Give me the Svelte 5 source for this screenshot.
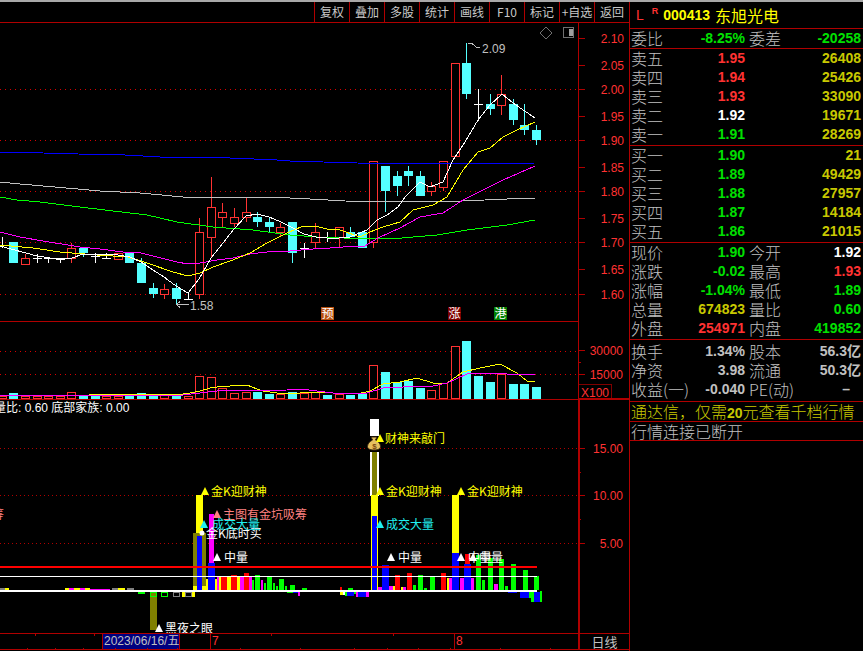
<script>
  const tools = ['复权', '叠加', '多股', '统计', '画线', 'F10', '标记', '+自选', '返回'];

  const cx = (i) => Math.round(1.7 + 11.615 * i);

  // kind, top of body, bottom of body, high, low (all in screen y)
  const candles = [
    ['w', 245, 245, 237, 248], ['c', 242, 263, 242, 263], ['r', 258, 264, 254, 264], ['w', 258, 258, 254, 263],
    ['w', 258, 258, 257, 263], ['w', 259, 259, 259, 263], ['r', 248, 258, 243, 263], ['c', 248, 253, 248, 257],
    ['w', 256, 256, 253, 263], ['w', 258, 258, 253, 259], ['r', 253, 259, 253, 259], ['c', 253, 263, 253, 263],
    ['c', 263, 283, 258, 283], ['c', 288, 294, 283, 298], ['r', 289, 294, 284, 299], ['c', 288, 299, 283, 304],
    ['w', 299, 299, 293, 299], ['r', 232, 294, 218, 299], ['r', 207, 237, 177, 258], ['r', 212, 217, 203, 227],
    ['r', 217, 223, 208, 227], ['r', 212, 217, 197, 222], ['c', 217, 222, 212, 227], ['c', 222, 227, 217, 232],
    ['r', 227, 232, 223, 237], ['c', 222, 253, 222, 263], ['w', 248, 248, 243, 258], ['r', 232, 242, 223, 248],
    ['w', 237, 237, 232, 242], ['r', 227, 237, 227, 247], ['c', 232, 237, 227, 237], ['c', 232, 248, 232, 248],
    ['r', 161, 242, 161, 248], ['c', 166, 191, 166, 212], ['c', 176, 186, 171, 196], ['c', 171, 176, 166, 186],
    ['c', 176, 196, 171, 196], ['r', 186, 191, 182, 196], ['r', 161, 187, 161, 191], ['r', 63, 156, 63, 156],
    ['c', 63, 94, 43, 99], ['w', 104, 104, 89, 121], ['c', 104, 109, 94, 115], ['r', 94, 105, 75, 115],
    ['c', 104, 120, 99, 125], ['c', 125, 130, 104, 135], ['c', 130, 140, 125, 145]
  ];

  const maLines = [
    ['#0000ff', '0,152 43,153 78,154 125,155 160,157 183,157 230,158 277,160 290,161 323,162 357,163 437,164 535,163'],
    ['#c0c0c0', '0,182 20,184 55,187 100,191 140,193 183,197 263,197 290,198 310,199 345,201 440,202 507,199 535,198'],
    ['#00ff00', '0,197 17,200 40,202 80,207 113,211 147,215 177,222 213,227 253,230 290,235 317,237 343,238 390,239 437,235 467,230 507,225 535,220'],
    ['#ff00ff', '0,232 20,237 43,241 80,247 100,249 123,252 137,252 157,257 177,262 188,264 200,263 217,260 233,258 250,254 267,252 290,251 313,249 330,248 343,247 365,246 378,238 400,228 420,217 443,213 463,200 503,180 535,166'],
    ['#ffff00', '0,245 33,248 60,252 72,253 97,255 128,257 147,263 173,272 188,276 200,273 213,267 233,260 250,253 267,243 287,233 303,226 315,226 327,229 340,230 360,237 370,232 383,227 400,222 413,210 433,205 447,197 463,170 478,152 490,148 503,137 517,130 535,122'],
    ['#ffffff', '0,246 37,256 50,258 61,259 72,258 83,254 96,254 118,255 130,257 141,262 153,270 164,277 176,286 188,293 199,279 211,258 223,243 234,229 246,216 257,214 269,217 281,222 293,228 304,234 316,237 327,238 339,238 350,237 367,230 377,220 387,215 398,207 405,197 420,182 430,187 443,182 453,160 465,142 478,120 490,105 502,94 513,103 535,118']
  ];

  const priceAxis = [
    ['2.10', 38], ['2.05', 65], ['2.00', 89], ['1.95', 116], ['1.90', 140], ['1.85', 167],
    ['1.80', 191], ['1.75', 218], ['1.70', 242], ['1.65', 269], ['1.60', 294]
  ];
  const priceGrid = [89, 140, 191, 242, 294];

  const badges = [
    ['预', 321, '#b8500f'], ['涨', 448, '#7d0000'], ['港', 494, '#008000']
  ];

  // top of each volume bar, same index as candles
  const volumes = [
    396, 393, 396, 396, 396, 396, 392, 396, 396, 396, 396, 396, 393, 395, 395, 395, 396, 376, 377, 388,
    393, 392, 392, 394, 394, 392, 393, 392, 395, 394, 395, 394, 365, 372, 382, 381, 388, 390, 383, 346,
    341, 376, 382, 374, 384, 384, 387
  ];
  // the flat sessions that still closed down
  const downCrosses = [8, 28, 41];
  const isDown = (i) => candles[i][0] === 'c' || downCrosses.includes(i);

  const volYellow = '89,394 113,394 183,394 190,393 200,391 210,388 217,387 230,386 240,385 247,385 257,389 263,391 277,393 300,393 320,392 333,393 357,394 370,391 383,384 400,382 417,378 433,383 447,383 463,372 480,368 500,364 517,373 527,381 535,382';
  const volMagenta = '0,396 147,395 183,395 200,393 217,391 287,390 300,389 317,391 333,393 367,393 383,388 403,387 433,386 447,383 467,374 485,373 507,374 535,375';

  const [Y, M, R, G, B, O, W, S] = ['#ffff00', '#ff00ff', '#ff0000', '#00ff00', '#0000ff', '#808000', '#ffffff', '#808080'];

  // x0, x1, y0, y1, colour, hollow
  const bars = [
    [0, 5, 588, 590, S], [5, 9, 588, 590, Y],
    [65, 69, 588, 590, Y], [69, 74, 588, 590, M], [74, 80, 588, 590, Y], [80, 85, 588, 590, M], [85, 90, 588, 590, Y],
    [90, 110, 589, 590, M], [112, 118, 588, 590, S], [118, 125, 588, 590, Y], [127, 134, 588, 590, S],
    [138, 145, 592, 594, G, 1], [150, 157, 592, 630, O], [150, 157, 592, 597, G, 1], [161, 168, 592, 597, G, 1],
    [173, 180, 592, 597, S, 1], [182, 185, 592, 597, Y], [185, 192, 592, 597, S, 1], [192, 195, 592, 597, Y],
    [193, 206, 533, 590, O], [196, 203, 495, 533, Y], [193, 197, 586, 590, Y], [202, 206, 586, 590, Y], [197, 202, 536, 590, B],
    [206, 208, 579, 590, Y], [209, 214, 514, 563, M], [208, 215, 563, 590, B], [215, 217, 579, 590, Y],
    [217, 219, 577, 590, M], [219, 221, 577, 590, Y], [221, 227, 577, 590, R], [227, 231, 577, 590, Y], [231, 237, 575, 590, R],
    [237, 240, 577, 590, Y], [240, 244, 577, 590, M], [244, 249, 573, 590, R], [249, 252, 577, 590, M],
    [252, 254, 580, 590, G], [255, 260, 575, 590, G], [261, 263, 580, 590, M], [264, 266, 583, 590, G], [267, 272, 577, 590, G],
    [273, 275, 583, 590, G], [276, 278, 586, 590, G], [279, 284, 579, 590, G], [285, 287, 586, 590, G], [290, 295, 585, 590, G],
    [302, 307, 588, 590, G], [287, 293, 592, 593, G], [293, 298, 592, 593, B], [298, 300, 592, 596, M],
    [340, 342, 587, 590, R], [348, 353, 588, 590, G], [340, 343, 592, 595, Y], [343, 345, 592, 595, W], [345, 347, 592, 596, G],
    [347, 354, 592, 596, B], [354, 356, 592, 594, G], [356, 358, 592, 597, M], [358, 366, 592, 597, B], [366, 369, 592, 597, M],
    [370, 379, 419, 436, W], [370, 379, 452, 496, W], [372, 377, 452, 495, O], [371, 378, 495, 590, Y], [372, 377, 516, 590, B],
    [378, 382, 587, 590, M], [382, 389, 565, 590, B], [389, 393, 586, 590, M], [393, 395, 586, 590, Y], [395, 400, 575, 590, R],
    [401, 403, 587, 590, Y], [403, 406, 587, 590, M], [407, 412, 573, 590, R], [413, 416, 585, 590, G], [418, 423, 575, 590, G],
    [424, 427, 588, 590, G], [430, 435, 577, 590, G], [441, 446, 573, 590, R], [447, 449, 578, 590, Y], [449, 452, 578, 590, M],
    [452, 459, 495, 553, Y], [452, 459, 553, 590, B], [460, 464, 578, 590, M], [464, 471, 564, 590, B], [465, 470, 554, 564, R],
    [471, 474, 578, 590, M], [476, 481, 555, 590, G], [482, 485, 580, 590, G], [488, 493, 558, 590, G], [494, 498, 584, 590, M],
    [499, 504, 559, 590, G], [505, 508, 586, 590, G], [511, 516, 564, 590, G], [523, 528, 570, 590, G], [534, 539, 576, 590, G],
    [508, 517, 592, 593, B], [520, 529, 592, 598, B], [529, 531, 592, 598, G], [531, 534, 592, 602, G], [534, 540, 592, 602, B], [540, 542, 591, 602, G]
  ];

  // text, triangle centre x, text x, centre y, colour
  const signals = [
    ['筹', null, -8, 514, '#ff8080'],
    ['主图有金坑吸筹', 217, 223, 514, '#ff8080'],
    ['金K迎财神', 205, 211, 491, Y],
    ['金K底时买', null, 206, 533, W],
    ['成交大量', 204, 212, 524, '#20f0f0'],
    ['中量', 217, 224, 557, W],
    ['黑夜之眼', 159, 165, 628, W],
    ['财神来敲门', 380, 385, 438, Y],
    ['金K迎财神', 380, 386, 491, Y],
    ['金K迎财神', 461, 467, 491, Y],
    ['成交大量', 380, 386, 524, '#20f0f0'],
    ['中量', 391, 398, 557, W],
    ['中量', 461, 468, 557, W],
    ['中量', 473, 479, 557, W]
  ];

  const quoteTop = ['委比', '-8.25%', '委差', '-20258'];
  const sells = [
    ['卖五', '1.95', 'up', '26408'], ['卖四', '1.94', 'up', '25426'], ['卖三', '1.93', 'up', '33090'],
    ['卖二', '1.92', 'white', '19671'], ['卖一', '1.91', 'down', '28269']
  ];
  const buys = [
    ['买一', '1.90', 'down', '21'], ['买二', '1.89', 'down', '49429'], ['买三', '1.88', 'down', '27957'],
    ['买四', '1.87', 'down', '14184'], ['买五', '1.86', 'down', '21015']
  ];
  const stats = [
    ['现价', '1.90', 'down', '今开', '1.92', 'white'],
    ['涨跌', '-0.02', 'down', '最高', '1.93', 'up'],
    ['涨幅', '-1.04%', 'down', '最低', '1.89', 'down'],
    ['总量', '674823', 'vol', '量比', '0.60', 'down'],
    ['外盘', '254971', 'up', '内盘', '419852', 'down']
  ];
  const finance = [
    ['换手', '1.34%', 'gray', '股本', '56.3亿', 'gray'],
    ['净资', '3.98', 'gray', '流通', '50.3亿', 'gray'],
    ['收益(一)', '-0.040', 'gray', 'PE(动)', '–', 'gray dash']
  ];
  const topTicks = [35, 94, 271, 393];
  const bottomTicks = [27, 55, 83, 115, 147, 177, 240, 300, 354, 387, 418, 450, 500, 550];
</script>

<div class="screen">
  <div class="main">
    <div class="toolbar">
      {#each tools as t}
        <div class="tool">{t}</div>
      {/each}
    </div>

    <svg class="chart" width="629" height="610" viewBox="0 23 629 610" shape-rendering="crispEdges">
      <!-- price pane -->
      {#each priceGrid as y}
        <line class="dots" x1="0" x2="578" y1={y} y2={y} />
      {/each}
      {#each candles as [kind, top, bottom, high, low], i}
        {#if kind === 'c'}
          <line x1={cx(i) + 0.5} x2={cx(i) + 0.5} y1={high} y2={low} stroke="#54ffff" />
          <rect x={cx(i) - 4} y={top} width="9" height={bottom - top} fill="#54ffff" />
        {:else if kind === 'r'}
          <line x1={cx(i) + 0.5} x2={cx(i) + 0.5} y1={high} y2={low} stroke="#ff3232" />
          <rect x={cx(i) - 3.5} y={top + 0.5} width="8" height={bottom - top} fill="#000" stroke="#ff3232" />
        {:else}
          <line x1={cx(i) + 0.5} x2={cx(i) + 0.5} y1={high} y2={low} stroke="#fff" />
          <line x1={cx(i) - 4} x2={cx(i) + 5} y1={top + 0.5} y2={top + 0.5} stroke="#fff" />
        {/if}
      {/each}
      {#each maLines as [color, pts]}
        <polyline points={pts} fill="none" stroke={color} />
      {/each}

      <polyline points="189,304.5 177,304.5" fill="none" stroke="#c0c0c0" />
      <polyline points="180,301.5 176.5,304.5 180,307.5" fill="none" stroke="#c0c0c0" />
      <text class="mark" x="190" y="309.5">1.58</text>
      <polyline points="467.5,43.5 472,43.5 476,47 480,48" fill="none" stroke="#c0c0c0" />
      <text class="mark" x="482" y="53">2.09</text>

      <polygon points="546,27 552,33 546,39 540,33" fill="none" stroke="#707070" />
      <rect x="563.5" y="27.5" width="10" height="10" fill="none" stroke="#707070" />
      <rect x="569" y="29" width="4" height="7" fill="#a0a0a0" />

      {#each badges as [label, x, color]}
        <rect {x} y="307" width="13" height="13" fill={color} />
        <text class="badge" x={x + 6.5} y="318">{label}</text>
      {/each}

      {#each priceAxis as [label, y]}
        <line class="rule" x1="578" x2="585" y1={y + 0.5} y2={y + 0.5} />
        <text class="axis" x="624" y={y + 4.5}>{label}</text>
      {/each}

      <!-- volume pane -->
      <line class="dots" x1="0" x2="578" y1="351" y2="351" />
      <line class="dots" x1="0" x2="578" y1="374" y2="374" />
      {#each volumes as top, i}
        {#if isDown(i)}
          <rect x={cx(i) - 4} y={top} width="9" height={399 - top} fill="#54ffff" />
        {:else}
          <rect x={cx(i) - 3.5} y={top + 0.5} width="8" height={398 - top} fill="#000" stroke="#ff3232" />
        {/if}
      {/each}
      <polyline points={volYellow} fill="none" stroke="#ffff00" />
      <polyline points={volMagenta} fill="none" stroke="#ff00ff" />
      <line class="rule" x1="578" x2="585" y1="350.5" y2="350.5" />
      <line class="rule" x1="578" x2="581" y1="362.5" y2="362.5" />
      <line class="rule" x1="578" x2="585" y1="374.5" y2="374.5" />
      <text class="axis" x="623" y="355">30000</text>
      <text class="axis" x="623" y="379">15000</text>
      <rect class="box" x="578.5" y="384.5" width="33" height="15" />
      <text class="axis" x="609" y="396.5">X100</text>

      <!-- indicator pane -->
      <text class="legend" x="-6" y="412">量比: 0.60 底部家族: 0.00</text>
      <line class="fine" x1="0" x2="578" y1="448" y2="448" />
      <line class="fine" x1="0" x2="578" y1="495" y2="495" />
      <line class="fine" x1="0" x2="578" y1="543" y2="543" />
      {#each bars as [x0, x1, y0, y1, color, hollow]}
        {#if hollow}
          <rect x={x0 + 0.5} y={y0 + 0.5} width={x1 - x0 - 1} height={y1 - y0 - 1} fill="none" stroke={color} />
        {:else}
          <rect x={x0} y={y0} width={x1 - x0} height={y1 - y0} fill={color} />
        {/if}
      {/each}
      <rect x="0" y="566" width="537" height="2" fill="#ff0000" />
      <rect x="0" y="576" width="537" height="1" fill="#ffffff" />
      <rect x="0" y="590" width="537" height="2" fill="#ffffff" />

      <g shape-rendering="auto">
        <path d="M371 437 h6 l-1.5 3 c3 1.5 5 4 5 6.5 c0 2.5-3 3.5-6.5 3.5 s-6.5-1-6.5-3.5 c0-2.5 2-5 5-6.5 z" fill="#e6c060" stroke="#3a2a10" stroke-width="1" />
        <text class="dollar" x="374.5" y="449">$</text>
      </g>

      {#each signals as [label, tx, x, y, color]}
        {#if tx !== null}
          <polygon points="{tx},{y - 4} {tx + 4},{y + 4} {tx - 4},{y + 4}" fill={color} shape-rendering="auto" />
        {:else if x > 0}
          <circle cx="202" cy={y} r="2.5" fill={color} shape-rendering="auto" />
        {/if}
        <text class="signal" {x} y={y + 4.5} fill={color}>{label}</text>
      {/each}

      {#each [['15.00', 448], ['10.00', 495], ['5.00', 543]] as [label, y]}
        <line class="rule" x1="578" x2="585" y1={y + 0.5} y2={y + 0.5} />
        <text class="axis" x="623" y={y + 4.5}>{label}</text>
      {/each}
      <line class="rule" x1="578" x2="581" y1="472.5" y2="472.5" />
      <line class="rule" x1="578" x2="581" y1="519.5" y2="519.5" />

      <!-- pane frames -->
      <line class="rule" x1="0" x2="578" y1="321.5" y2="321.5" />
      <line class="rule" x1="0" x2="629" y1="399.5" y2="399.5" />
      <line class="rule" x1="578" x2="629" y1="398.5" y2="398.5" />
      <line class="rule" x1="578.5" x2="578.5" y1="23" y2="399" />
      <line class="rule" x1="578.5" x2="578.5" y1="399" y2="633" />
      <line class="rule" x1="579.5" x2="579.5" y1="399" y2="633" />
    </svg>

    <div class="timebar">
      <div class="cell first"></div>
      <div class="cell date">2023/06/16/五</div>
      <div class="cell blank"></div>
      <div class="cell month seven">7</div>
      <div class="cell month eight">8</div>
      <div class="cell period">日线</div>
      <svg class="ticks" width="578" height="16" shape-rendering="crispEdges">
        {#each topTicks as x}
          <line x1={x + 0.5} x2={x + 0.5} y1="0" y2="2" />
        {/each}
        {#each bottomTicks as x}
          <line x1={x + 0.5} x2={x + 0.5} y1="14" y2="16" />
        {/each}
      </svg>
    </div>
  </div>

  <aside class="panel">
    <header class="title">
      <span class="flag up">L</span>
      <sup class="rz up">R</sup>
      <span class="code">000413</span>
      <span class="name">东旭光电</span>
    </header>

    <div class="sec">
      <span class="label">{quoteTop[0]}</span>
      <span class="num down">{quoteTop[1]}</span>
      <span class="label second">{quoteTop[2]}</span>
      <span class="num down">{quoteTop[3]}</span>
    </div>

    <div class="sec five">
      {#each sells as [label, price, tone, volume]}
        <span class="label">{label}</span>
        <span class="num {tone}">{price}</span>
        <span class="num vol last">{volume}</span>
      {/each}
    </div>

    <div class="sec five">
      {#each buys as [label, price, tone, volume]}
        <span class="label">{label}</span>
        <span class="num {tone}">{price}</span>
        <span class="num vol last">{volume}</span>
      {/each}
    </div>

    <div class="sec five">
      {#each stats as [a, av, at, b, bv, bt]}
        <span class="label">{a}</span>
        <span class="num {at}">{av}</span>
        <span class="label second">{b}</span>
        <span class="num {bt}">{bv}</span>
      {/each}
    </div>

    <div class="sec three">
      {#each finance as [a, av, at, b, bv, bt]}
        <span class="label wide">{a}</span>
        <span class="num {at}">{av}</span>
        <span class="label second wide">{b}</span>
        <span class="num {bt}">{bv}</span>
      {/each}
    </div>

    <div class="notice ad">通达信，仅需<b>20</b>元查看千档行情</div>
    <div class="notice status">行情连接已断开</div>
  </aside>
</div>

<style>
  :global(body) {
    margin: 0;
    background: #000;
  }

  .screen {
    display: flex;
    width: 863px;
    height: 651px;
    box-sizing: border-box;
    border-top: 2px solid #a8a8a8;
    background: #000;
    overflow: hidden;
    font-family: "Noto Sans CJK SC", "Liberation Sans", sans-serif;
    color: #c0c0c0;
  }

  .main {
    width: 629px;
    flex: none;
    display: flex;
    flex-direction: column;
  }

  .toolbar {
    display: flex;
    justify-content: flex-end;
    height: 20px;
    border-bottom: 1px solid #b00000;
    flex: none;
  }
  .tool {
    width: 34px;
    border-left: 1px solid #b00000;
    text-align: center;
    font-size: 12px;
    line-height: 20px;
    color: #c8c8c8;
  }

  .chart {
    display: block;
    flex: none;
  }
  .chart text {
    font-family: "Liberation Sans", sans-serif;
  }
  .dots {
    stroke: #d80000;
    stroke-dasharray: 1 4;
  }
  .fine {
    stroke: #b00000;
    stroke-dasharray: 1 3;
  }
  .rule {
    stroke: #b00000;
  }
  .box {
    fill: none;
    stroke: #800000;
  }
  .axis {
    fill: #ff3232;
    font-size: 12px;
    text-anchor: end;
  }
  .mark {
    fill: #c0c0c0;
    font-size: 12px;
  }
  .chart .badge {
    fill: #fff;
    font-family: "Noto Sans CJK SC", sans-serif;
    font-size: 12px;
    text-anchor: middle;
  }
  .chart .legend {
    fill: #fff;
    font-family: "Liberation Sans", "Noto Sans CJK SC", sans-serif;
    font-size: 12px;
  }
  .chart .signal {
    font-family: "Noto Sans CJK SC", sans-serif;
    font-size: 12px;
  }
  .chart .dollar {
    fill: #7a4a10;
    font-size: 8px;
    font-weight: bold;
    text-anchor: middle;
  }

  .timebar {
    position: relative;
    display: flex;
    height: 15px;
    flex: none;
    border-top: 1px solid #b00000;
    border-bottom: 1px solid #b00000;
    font-size: 12px;
    line-height: 15px;
  }
  .cell {
    box-sizing: border-box;
    flex: none;
  }
  .first {
    width: 102px;
  }
  .date {
    width: 78px;
    padding-left: 1px;
    background: #000080;
    border-left: 1px solid #b00000;
    border-right: 1px solid #b00000;
    font-family: "Liberation Sans", "Noto Sans CJK SC", sans-serif;
    white-space: nowrap;
    overflow: hidden;
  }
  .blank {
    width: 30px;
  }
  .month {
    border-left: 1px solid #b00000;
    padding-left: 1px;
    color: #ff3232;
    font-family: "Liberation Sans", sans-serif;
  }
  .seven {
    width: 244px;
  }
  .eight {
    width: 124px;
  }
  .period {
    width: 51px;
    border-left: 2px solid #b00000;
    text-align: center;
    font-size: 13px;
  }
  .ticks {
    position: absolute;
    left: 0;
    top: 0;
    stroke: #b00000;
  }

  .panel {
    width: 234px;
    flex: none;
    box-sizing: border-box;
    border-left: 1px solid #b00000;
  }
  .title {
    display: flex;
    align-items: center;
    height: 26px;
    border-bottom: 1px solid #b00000;
    white-space: nowrap;
  }
  .flag {
    margin-left: 6px;
    font: 14px "Liberation Sans", sans-serif;
  }
  .rz {
    margin: -8px 0 0 8px;
    font: bold 9px "Liberation Sans", sans-serif;
  }
  .code {
    margin-left: 5px;
    color: #ffff00;
    font: bold 14px "Liberation Sans", sans-serif;
  }
  .name {
    margin-left: 5px;
    color: #ffff00;
    font-size: 16px;
  }

  .sec {
    display: grid;
    grid-template-columns: 34px 80px 36px 80px;
    grid-auto-rows: 19px;
    padding-left: 1px;
    border-bottom: 1px solid #b00000;
    line-height: 19px;
    white-space: nowrap;
  }
  .five {
    padding-bottom: 1px;
  }
  .three {
    padding-top: 2px;
    padding-bottom: 2px;
  }
  .label {
    font-size: 16px;
    font-weight: 300;
  }
  .wide {
    width: 0;
  }
  .second {
    padding-left: 4px;
  }
  .num {
    font: bold 14px/19px "Liberation Sans", "Noto Sans CJK SC", sans-serif;
    text-align: right;
    white-space: nowrap;
  }
  .last {
    grid-column: 4;
  }
  .up {
    color: #ff3232;
  }
  .down {
    color: #00e000;
  }
  .white {
    color: #fff;
  }
  .vol {
    color: #c8c800;
  }
  .gray {
    color: #c0c0c0;
  }
  .dash {
    padding-right: 11px;
  }

  .notice {
    padding-left: 1px;
    font-size: 16px;
    font-weight: 300;
    white-space: nowrap;
    border-bottom: 1px solid #b00000;
  }
  .notice b {
    font: bold 14px "Liberation Sans", sans-serif;
  }
  .ad {
    height: 19px;
    line-height: 19px;
    color: #c8c800;
  }
  .status {
    height: 18px;
    line-height: 18px;
  }
</style>
